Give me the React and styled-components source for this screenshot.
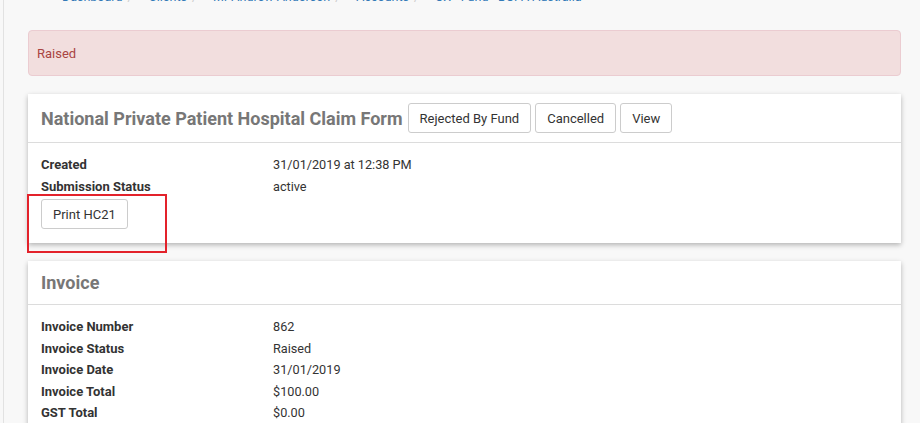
import React from 'react';
import styled, { createGlobalStyle } from 'styled-components';
import { FaTachometerAlt } from 'react-icons/fa';

const GlobalStyle = createGlobalStyle`
  html, body {
    margin: 0;
    padding: 0;
    background: #f8f8f8;
    font-family: Roboto, "Liberation Sans", Arial, sans-serif;
    color: #333;
    overflow: hidden;
  }
`;

const Page = styled.div`
  display: flex;
  min-height: 423px;
`;

const SideEdge = styled.div`
  width: 3px;
  flex-shrink: 0;
  border-right: 1px solid #e2e2e2;
  background: #f8f8f8;
`;

const Content = styled.div`
  flex: 1;
  padding: 0 19px 0 24px;
`;

const Breadcrumb = styled.ol`
  list-style: none;
  margin: -12px 0 0;
  padding: 0 0 0 17px;
  display: flex;
  align-items: center;
  font-size: 12.5px;
  line-height: 17px;
  height: 17px;
`;

const Crumb = styled.li`
  color: #337ab7;
  display: flex;
  align-items: center;
  gap: 8px;

  & + &::before {
    content: '/';
    color: #ccc;
    padding: 0 8px 0 5px;
  }
`;

const Alert = styled.div`
  margin-top: 25px;
  background: #f2dede;
  border: 1px solid #ebccd1;
  border-radius: 4px;
  color: #a94442;
  font-size: 13px;
  line-height: 16px;
  padding: 15px 8px 13px;
`;

const Card = styled.section`
  position: relative;
  background: #fff;
  margin-top: ${p => p.$gap}px;
  box-shadow: 0 2px 5px rgba(0, 0, 0, 0.28);
`;

const CardHeader = styled.header`
  display: flex;
  align-items: center;
  gap: 4px;
  padding: 9px 13px;
  border-bottom: 1px solid #dcdcdc;
`;

const Title = styled.h2`
  margin: 0 1px 0 0;
  font-size: 18px;
  line-height: 25px;
  font-weight: 700;
  color: #777;
`;

const Button = styled.button`
  height: 30px;
  padding: 0 11px;
  background: #fff;
  border: 1px solid #ccc;
  border-radius: 3px;
  font-family: inherit;
  font-size: 13px;
  color: #333;
  cursor: pointer;
`;

const CardBody = styled.div`
  padding: 11px 13px 14px;
`;

const Details = styled.dl`
  display: grid;
  grid-template-columns: 232px 1fr;
  margin: 0;
  font-size: 13px;
  line-height: 21.5px;
`;

const Label = styled.dt`
  font-weight: 700;
  color: #333;
`;

const Value = styled.dd`
  margin: 0;
  color: #333;
  font-size: 12.7px;
`;

const Actions = styled.div`
  margin-top: 2px;
`;

const Highlight = styled.div`
  position: absolute;
  left: -1px;
  top: 100px;
  width: 136px;
  height: 55px;
  border: 2px solid #e3222b;
  pointer-events: none;
`;

const crumbs = ['Dashboard', 'Clients', 'Mr Andrew Anderson', 'Accounts', 'UX - Fund - BUPA Australia'];

const claimRows = [
  ['Created', '31/01/2019 at 12:38 PM'],
  ['Submission Status', 'active'],
];

const invoiceRows = [
  ['Invoice Number', '862'],
  ['Invoice Status', 'Raised'],
  ['Invoice Date', '31/01/2019'],
  ['Invoice Total', '$100.00'],
  ['GST Total', '$0.00'],
];

function DetailList({ rows }) {
  return (
    <Details>
      {rows.map(([k, v]) => (
        <React.Fragment key={k}>
          <Label>{k}</Label>
          <Value>{v}</Value>
        </React.Fragment>
      ))}
    </Details>
  );
}

export default function App() {
  return (
    <Page>
      <GlobalStyle />
      <SideEdge />
      <Content>
        <Breadcrumb>
          {crumbs.map((c, i) => (
            <Crumb key={c}>
              {i === 0 && <FaTachometerAlt size={9} />}
              {c}
            </Crumb>
          ))}
        </Breadcrumb>

        <Alert>Raised</Alert>

        <Card $gap={18}>
          <CardHeader>
            <Title>National Private Patient Hospital Claim Form</Title>
            <Button>Rejected By Fund</Button>
            <Button>Cancelled</Button>
            <Button>View</Button>
          </CardHeader>
          <CardBody>
            <DetailList rows={claimRows} />
            <Actions>
              <Button>Print HC21</Button>
            </Actions>
          </CardBody>
          <Highlight />
        </Card>

        <Card $gap={18}>
          <CardHeader>
            <Title>Invoice</Title>
          </CardHeader>
          <CardBody>
            <DetailList rows={invoiceRows} />
          </CardBody>
        </Card>
      </Content>
    </Page>
  );
}
